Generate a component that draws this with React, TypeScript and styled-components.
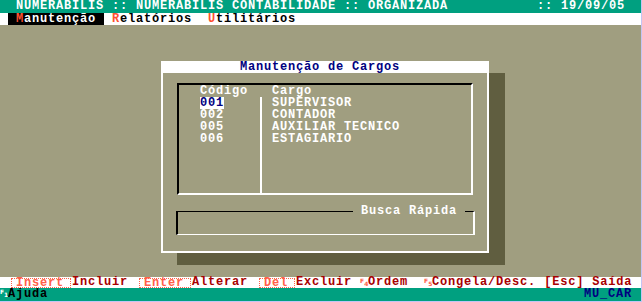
import styled, { createGlobalStyle } from "styled-components";

const GlobalStyle = createGlobalStyle`
  html, body {
    margin: 0;
    padding: 0;
    background: #c4c4f4;
  }
  body {
    font-family: "Liberation Mono", "DejaVu Sans Mono", monospace;
    font-size: 12px;
    letter-spacing: 0.8px;
    font-weight: bold;
  }
`;

const Screen = styled.div`
  width: 641px;
  height: 301px;
  display: flex;
  flex-direction: column;
  background: #a09e80;
  line-height: 12px;
  white-space: pre;
`;

// top bars
const TitleBar = styled.div`
  height: 13px;
  line-height: 13px;
  background: #00a080;
  color: #fff;
  display: flex;
  justify-content: space-between;
  padding: 0 16px 0 16px;
`;

const MenuBar = styled.div`
  height: 12px;
  background: #fff;
  display: flex;
  padding-left: 8px;
`;

const MenuItem = styled.span<{ $active?: boolean }>`
  padding: 0 8px;
  background: ${({ $active }) => ($active ? "#000" : "transparent")};
  color: ${({ $active }) => ($active ? "#fff" : "#000")};
`;

const HotKey = styled.span`
  color: #ff5030;
`;

// desktop
const Desktop = styled.div`
  flex: 1;
  padding: 36px 0 0 161px;
`;

const Dialog = styled.div`
  width: 328px;
  height: 192px;
  display: flex;
  flex-direction: column;
  box-shadow: 16px 12px 0 #605e40;
`;

const DialogTitle = styled.div`
  height: 12px;
  background: #fff;
  color: #000080;
  padding-left: 79px;
`;

const DialogBody = styled.div`
  flex: 1;
  border: 2px solid #fff;
  border-top: none;
  padding: 10px 0 0 14px;
  display: flex;
  flex-direction: column;
`;

const ListBox = styled.div`
  box-sizing: border-box;
  width: 296px;
  height: 112px;
  border-top: 2px solid #000;
  border-left: 2px solid #000;
  border-right: 2px solid #fff;
  border-bottom: 2px solid #fff;
  display: flex;
  flex-direction: column;
  color: #fff;
`;

const Columns = styled.div<{ $grow?: boolean }>`
  display: grid;
  grid-template-columns: 83px 1fr;
  flex: ${({ $grow }) => ($grow ? 1 : "none")};
`;

const CodeCol = styled.div<{ $sep?: boolean }>`
  box-sizing: border-box;
  padding-left: 21px;
  border-right: ${({ $sep }) => ($sep ? "2px solid #fff" : "none")};
  display: flex;
  flex-direction: column;
`;

const CargoCol = styled.div`
  padding-left: 10px;
  display: flex;
  flex-direction: column;
`;

const Line = styled.div`
  height: 12px;
`;

const Code = styled.span<{ $selected?: boolean }>`
  display: inline-block;
  width: 24px;
  background: ${({ $selected }) => ($selected ? "#fff" : "transparent")};
  color: ${({ $selected }) => ($selected ? "#000080" : "#fff")};
`;

const SearchBox = styled.div`
  position: relative;
  box-sizing: border-box;
  margin: 16px 0 0 -1px;
  width: 299px;
  height: 24px;
  border-top: 1px solid #000;
  border-left: 2px solid #000;
  border-right: 2px solid #fff;
  border-bottom: 1px solid #fff;
`;

const SearchLabel = styled.span`
  position: absolute;
  right: 8px;
  top: -7px;
  padding: 0 8px;
  background: #a09e80;
  color: #fff;
`;

// bottom bars
const KeyBar = styled.div`
  height: 11px;
  line-height: 11px;
  background: #fff;
  color: #a80000;
  display: flex;
  padding-left: 8px;
`;

const KeyBox = styled.span`
  box-sizing: border-box;
  height: 10px;
  margin: 1px 1px 0 3px;
  padding: 0 6px 0 4px;
  border: 1px dotted #ff6048;
  color: #ff6048;
  line-height: 9px;
`;

// tiny "F" + digit packed into one character cell
const FKey = styled.span<{ $light?: boolean }>`
  display: inline-flex;
  justify-content: space-between;
  width: 8px;
  height: 11px;
  padding: 1px 0 0 0;
  box-sizing: border-box;
  font-family: "DejaVu Sans", sans-serif;
  font-size: 6px;
  line-height: 6px;
  letter-spacing: 0;
  font-weight: bold;
  color: ${({ $light }) => ($light ? "#fff" : "#ff6048")};

  span:last-child {
    align-self: flex-end;
    padding-bottom: 1px;
  }
`;

const StatusBar = styled.div`
  height: 13px;
  line-height: 13px;
  background: #00a080;
  color: #000;
  display: flex;
  justify-content: space-between;
  padding-right: 9px;
`;

const StatusLeft = styled.span`
  display: flex;
  align-items: flex-start;
`;

const StatusRight = styled.span`
  color: #000080;
`;

const cargos = [
  { code: "001", name: "SUPERVISOR" },
  { code: "002", name: "CONTADOR" },
  { code: "005", name: "AUXILIAR TECNICO" },
  { code: "006", name: "ESTAGIARIO" },
];

const Fn = ({ n, light }: { n: number; light?: boolean }) => (
  <FKey $light={light}>
    <span>F</span>
    <span>{n}</span>
  </FKey>
);

export default function App() {
  return (
    <>
      <GlobalStyle />
      <Screen>
        <TitleBar>
          <span>NUMERABILIS :: NUMERABILIS CONTABILIDADE :: ORGANIZADA</span>
          <span>:: 19/09/05</span>
        </TitleBar>
        <MenuBar>
          <MenuItem $active>
            <HotKey>M</HotKey>anutenção
          </MenuItem>
          <MenuItem>
            <HotKey>R</HotKey>elatórios
          </MenuItem>
          <MenuItem>
            <HotKey>U</HotKey>tilitários
          </MenuItem>
        </MenuBar>

        <Desktop>
          <Dialog>
            <DialogTitle>Manutenção de Cargos</DialogTitle>
            <DialogBody>
              <ListBox>
                <Columns>
                  <CodeCol>
                    <Line>Código</Line>
                  </CodeCol>
                  <CargoCol>
                    <Line>Cargo</Line>
                  </CargoCol>
                </Columns>
                <Columns $grow>
                  <CodeCol $sep>
                    {cargos.map((c, i) => (
                      <Line key={c.code}>
                        <Code $selected={i === 0}>{c.code}</Code>
                      </Line>
                    ))}
                  </CodeCol>
                  <CargoCol>
                    {cargos.map((c) => (
                      <Line key={c.code}>{c.name}</Line>
                    ))}
                  </CargoCol>
                </Columns>
              </ListBox>
              <SearchBox>
                <SearchLabel>Busca Rápida</SearchLabel>
              </SearchBox>
            </DialogBody>
          </Dialog>
        </Desktop>

        <KeyBar>
          <KeyBox>Insert</KeyBox>
          <span>Incluir </span>
          <KeyBox>Enter</KeyBox>
          <span>Alterar </span>
          <KeyBox>Del</KeyBox>
          <span>Excluir </span>
          <Fn n={4} />
          <span>Ordem  </span>
          <Fn n={5} />
          <span>Congela/Desc. [Esc] Saída</span>
        </KeyBar>
        <StatusBar>
          <StatusLeft>
            <Fn n={1} light />
            <span>Ajuda</span>
          </StatusLeft>
          <StatusRight>MU_CAR</StatusRight>
        </StatusBar>
      </Screen>
    </>
  );
}
